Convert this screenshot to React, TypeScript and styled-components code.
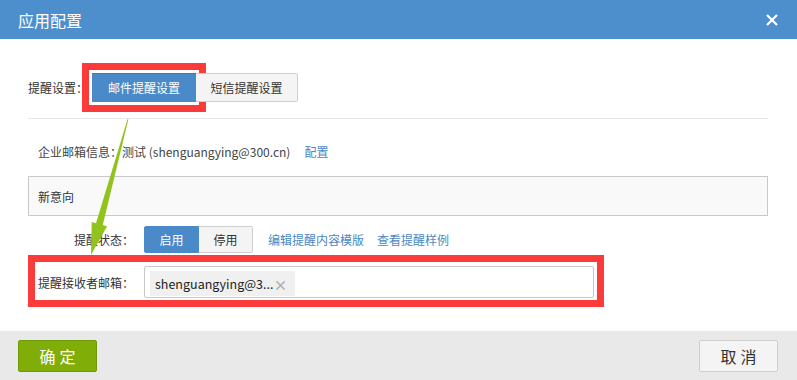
import styled, { createGlobalStyle } from "styled-components";

const GlobalStyle = createGlobalStyle`
    html, body {
        margin: 0;
        padding: 0;
        background: #fff;
    }
    body {
        font-family: "Noto Sans CJK SC", "Liberation Sans", sans-serif;
        font-size: 12px;
        color: #333;
    }
`;

const Dialog = styled.div`
    position: relative;
    width: 797px;
    height: 380px;
    display: flex;
    flex-direction: column;
    overflow: hidden;
`;

const Header = styled.div`
    height: 39px;
    flex-shrink: 0;
    background: #4d8fcc;
    display: flex;
    align-items: center;
    justify-content: space-between;
    padding: 0 19px 0 18px;
`;

const Title = styled.span`
    color: #fff;
    font-size: 16px;
    line-height: 1;
`;

const Close = styled.button`
    width: 12px;
    height: 12px;
    padding: 0;
    border: none;
    background: none;
    display: flex;
    svg {
        width: 12px;
        height: 12px;
    }
`;

const Body = styled.div`
    flex: 1;
    display: flex;
    flex-direction: column;
    align-items: flex-start;
    padding: 34px 29px 0 28px;
`;

const TabRow = styled.div`
    display: flex;
    align-items: center;
    height: 29px;
`;

const TabLabel = styled.span`
    width: 64px;
    white-space: nowrap;
`;

// full-width colon kept at one em, as the reference font draws it
const Colon = styled.span`
    display: inline-block;
    width: 12px;
    text-align: center;
    overflow: hidden;
    vertical-align: top;
`;

const TabButton = styled.button<{ $active?: boolean }>`
    height: 29px;
    width: ${(p) => (p.$active ? "104px" : "102px")};
    padding: 0;
    font-family: inherit;
    font-size: 12px;
    border: 1px solid ${(p) => (p.$active ? "#4a88c6" : "#cfcfcf")};
    background: ${(p) => (p.$active ? "#4a8ac8" : "#f4f4f4")};
    color: ${(p) => (p.$active ? "#fff" : "#333")};
    border-radius: ${(p) => (p.$active ? "0" : "0 2px 2px 0")};
    ${(p) => (p.$active ? "border-top-color: #3c78b3;" : "border-left: none;")}
    ${(p) => (p.$active ? "outline: 7px solid #fb3a3a; outline-offset: 3px;" : "")}
`;

const Divider = styled.div`
    align-self: stretch;
    height: 1px;
    background: #e6e6e6;
    margin-top: 16px;
`;

const InfoLine = styled.div`
    margin-top: 23px;
    padding-left: 10px;
    line-height: 20px;
    color: #444;
`;

const Link = styled.a<{ $gap?: number }>`
    color: #4a87c5;
    text-decoration: none;
    margin-left: ${(p) => p.$gap ?? 0}px;
`;

const TopicBox = styled.div`
    margin-top: 14px;
    align-self: stretch;
    height: 40px;
    box-sizing: border-box;
    border: 1px solid #c9c9c9;
    background: #f9f9f9;
    display: flex;
    align-items: center;
    padding: 0 9px;
`;

const FormRow = styled.div`
    display: flex;
    align-items: center;
    margin-top: 10px;
    padding-left: 10px;
    height: 27px;
`;

const Highlight = styled.div`
    margin-top: 2px;
    border: 7px solid #fb3a3a;
    padding: 4px 3px 2px 3px;
    display: flex;
    align-items: center;
`;

const FieldLabel = styled.span`
    width: 96px;
    margin-right: 10px;
    text-align: right;
    white-space: nowrap;
`;

const Toggle = styled.div`
    display: flex;
    height: 27px;
`;

const ToggleItem = styled.span<{ $on?: boolean }>`
    width: ${(p) => (p.$on ? "55px" : "54px")};
    box-sizing: border-box;
    display: flex;
    align-items: center;
    justify-content: center;
    background: ${(p) => (p.$on ? "#4a8ac8" : "#f4f4f4")};
    color: ${(p) => (p.$on ? "#fff" : "#333")};
    border: 1px solid ${(p) => (p.$on ? "#4a8ac8" : "#cfcfcf")};
    border-radius: ${(p) => (p.$on ? "2px 0 0 2px" : "0 2px 2px 0")};
    ${(p) => (p.$on ? "" : "border-left: none;")}
`;

const TagInput = styled.div`
    width: 450px;
    height: 32px;
    box-sizing: border-box;
    border: 1px solid #c9c9c9;
    border-radius: 2px;
    background: #fff;
    display: flex;
    align-items: flex-start;
    padding: 4px 5px;
`;

const Tag = styled.span`
    width: 145px;
    height: 25px;
    box-sizing: border-box;
    background: #f0f0f0;
    display: flex;
    align-items: center;
    justify-content: space-between;
    padding: 0 8px 0 5px;
    font-size: 12.5px;
    color: #222;
`;

const TagRemove = styled.span`
    color: #b0b0b0;
    font-size: 14px;
    font-weight: bold;
`;

const Footer = styled.div`
    height: 49px;
    flex-shrink: 0;
    background: #e9e9e9;
    display: flex;
    align-items: flex-start;
    justify-content: space-between;
    padding: 9px 19px 0 18px;
    box-sizing: border-box;
`;

const FooterButton = styled.button<{ $primary?: boolean }>`
    width: 79px;
    height: 32px;
    padding: 0;
    font-family: inherit;
    font-size: 16px;
    letter-spacing: 4px;
    text-indent: 4px;
    border-radius: 2px;
    border: 1px solid ${(p) => (p.$primary ? "#6f9906" : "#cfcfcf")};
    background: ${(p) => (p.$primary ? "#80ad08" : "#f4f4f4")};
    color: ${(p) => (p.$primary ? "#fff" : "#333")};
`;

const Arrow = styled.svg`
    position: absolute;
    left: 0;
    top: 0;
    width: 797px;
    height: 380px;
    pointer-events: none;
`;

export default function App() {
    return (
        <>
            <GlobalStyle />
            <Dialog>
                <Header>
                    <Title>应用配置</Title>
                    <Close>
                        <svg viewBox="0 0 12 12">
                            <path d="M1 1L11 11M11 1L1 11" stroke="#fff" strokeWidth="2.2" />
                        </svg>
                    </Close>
                </Header>
                <Body>
                    <TabRow>
                        <TabLabel>提醒设置<Colon>：</Colon></TabLabel>
                        <TabButton $active>邮件提醒设置</TabButton>
                        <TabButton>短信提醒设置</TabButton>
                    </TabRow>
                    <Divider />
                    <InfoLine>
                        企业邮箱信息<Colon>：</Colon>测试 (shenguangying@300.cn)
                        <Link $gap={14}>配置</Link>
                    </InfoLine>
                    <TopicBox>新意向</TopicBox>
                    <FormRow>
                        <FieldLabel>提醒状态<Colon>：</Colon></FieldLabel>
                        <Toggle>
                            <ToggleItem $on>启用</ToggleItem>
                            <ToggleItem>停用</ToggleItem>
                        </Toggle>
                        <Link $gap={15}>编辑提醒内容模版</Link>
                        <Link $gap={13}>查看提醒样例</Link>
                    </FormRow>
                    <Highlight>
                        <FieldLabel>提醒接收者邮箱<Colon>：</Colon></FieldLabel>
                        <TagInput>
                            <Tag>
                                shenguangying@3...
                                <TagRemove>×</TagRemove>
                            </Tag>
                        </TagInput>
                    </Highlight>
                </Body>
                <Footer>
                    <FooterButton $primary>确定</FooterButton>
                    <FooterButton>取消</FooterButton>
                </Footer>
                <Arrow viewBox="0 0 797 380">
                    <polygon
                        points="127.6,119 128.4,119.2 102.8,225 107.1,226.2 91,255 91.7,222 96,223.2"
                        fill="#92c31c"
                    />
                </Arrow>
            </Dialog>
        </>
    );
}
